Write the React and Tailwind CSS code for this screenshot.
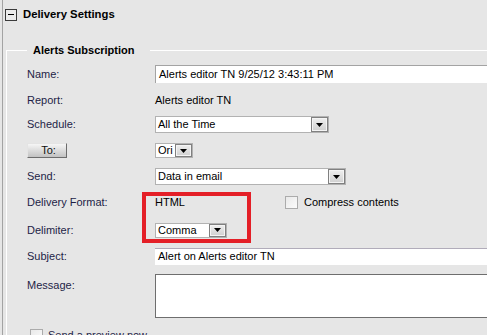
import React from "react";

const Label = ({ children, className = "" }) => (
  <div className={"w-[128px] shrink-0 text-[#1e1e46] " + className}>{children}</div>
);

const Arrow = () => (
  <div className="w-[17px] h-full shrink-0 border border-[#808080] bg-[#808080]">
    <div className="w-full h-full flex items-center justify-center border border-[#f4f4f4] bg-gradient-to-b from-[#ececec] to-[#d2d2d2]">
      <svg width="7" height="4" viewBox="0 0 7 4">
        <polygon points="0,0 7,0 3.5,4" fill="#000" />
      </svg>
    </div>
  </div>
);

const Select = ({ value, width, height }) => (
  <div
    className="flex bg-white border border-[#b2b2b2]"
    style={{ width, height }}
  >
    <div className="flex-1 flex items-center pl-[2px] leading-none">{value}</div>
    <Arrow />
  </div>
);

const Checkbox = () => (
  <div className="w-[13px] h-[13px] shrink-0 border border-[#ababab] bg-gradient-to-br from-[#e9e9e9] to-[#fbfbfb]" />
);

const Row = ({ h, children, className = "" }) => (
  <div className={"flex items-center " + className} style={{ height: h }}>
    {children}
  </div>
);

export default function App() {
  return (
    <div className="relative w-[487px] h-[335px] overflow-hidden bg-[#e6e6e6] text-[11px] leading-[13px] text-black font-['Liberation_Sans',Arial,sans-serif]">
      <div className="ml-[2px] h-full border-l border-[#a3a3a3]">
        {/* header */}
        <div className="flex items-center h-[29px]">
          <div className="ml-[2px] w-[12px] h-[12px] border border-[#3a3a3a] bg-[#ececec] flex items-center justify-center">
            <div className="w-[6px] h-[1px] bg-black" />
          </div>
          <div className="ml-[6px] font-bold text-[11.3px]">Delivery Settings</div>
        </div>

        <fieldset className="mt-[15px] ml-[3px] w-[560px] border-t border-l border-white pl-[20px]">
          <legend className="pl-[6px] pr-[16px] font-bold">Alerts Subscription</legend>

          <Row h={20} className="mt-[7px]">
            <Label>Name:</Label>
            <div className="flex-1 h-[18px] bg-white border-t border-l border-[#a3a3a3] flex items-center pl-[3px]">
              Alerts editor TN 9/25/12 3:43:11 PM
            </div>
          </Row>

          <Row h={32}>
            <Label>Report:</Label>
            <div>Alerts editor TN</div>
          </Row>

          <Row h={17}>
            <Label>Schedule:</Label>
            <Select value="All the Time" width={174} height={17} />
          </Row>

          <Row h={35}>
            <div className="w-[128px] shrink-0">
              <div className="w-[40px] h-[15px] flex items-center justify-center pl-[3px] border border-t-[#e4e4e4] border-l-[#e4e4e4] border-r-[#6c6c6c] border-b-[#6c6c6c] bg-gradient-to-b from-[#f6f6f6] to-[#c2c2c2] text-[#111]">
                To:
              </div>
            </div>
            <Select value="Ori" width={38} height={15} />
          </Row>

          <Row h={17}>
            <Label>Send:</Label>
            <Select value="Data in email" width={191} height={17} />
          </Row>

          <Row h={34}>
            <Label>Delivery Format:</Label>
            <div className="w-[130px] shrink-0">HTML</div>
            <Checkbox />
            <div className="ml-[6px]">Compress contents</div>
          </Row>

          <Row h={22}>
            <Label>Delimiter:</Label>
            <Select value="Comma" width={72} height={15} />
          </Row>

          <Row h={30}>
            <Label>Subject:</Label>
            <div className="flex-1 h-[17px] bg-white border-t border-[#b1acba] flex items-center pl-[3px]">
              Alert on Alerts editor TN
            </div>
          </Row>

          <div className="flex items-start mt-[3px]">
            <Label className="pt-[5px]">Message:</Label>
            <div className="flex-1 h-[44px] bg-white border border-[#6e6e6e]" />
          </div>

          <div className="flex items-center mt-[11px] ml-[3px]">
            <Checkbox />
            <div className="ml-[5px] text-[#1e1e46]">Send a preview now</div>
          </div>
        </fieldset>
      </div>

      {/* annotation box */}
      <div className="absolute left-[142px] top-[192px] w-[109px] h-[51px] border-4 border-[#e41f27]" />
    </div>
  );
}
